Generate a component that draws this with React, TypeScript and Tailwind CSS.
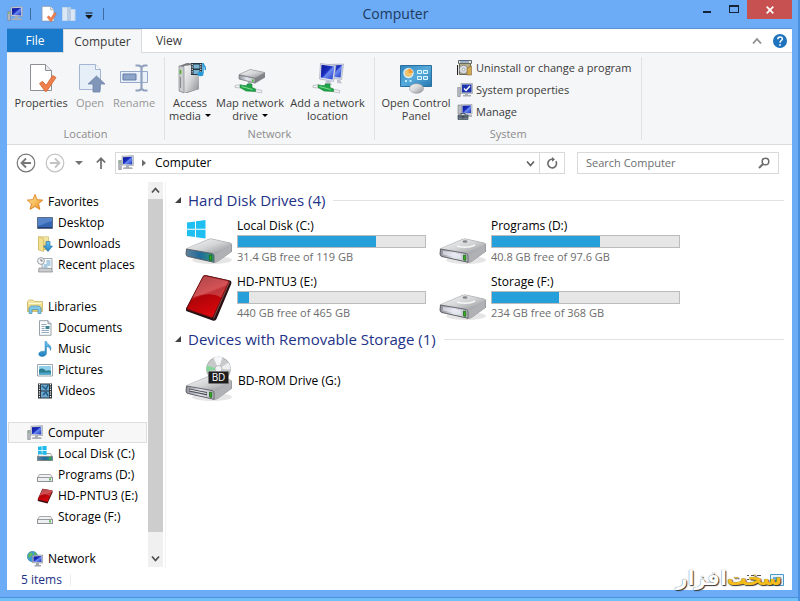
import { useState } from "react";
import type { ReactNode } from "react";

type IconProps = { className?: string };

/* Gradients shared by all of the icons below. */
function IconDefs() {
  return (
    <svg width="0" height="0" className="absolute" aria-hidden="true">
      <defs>
        <linearGradient id="metal" x1="0" y1="0" x2="1" y2="1">
          <stop offset="0" stopColor="#fafafa" />
          <stop offset="0.5" stopColor="#d3d4d6" />
          <stop offset="1" stopColor="#8b8c8f" />
        </linearGradient>
        <linearGradient id="metalFront" x1="0" y1="0" x2="1" y2="0">
          <stop offset="0" stopColor="#8d8f96" />
          <stop offset="0.5" stopColor="#e4e6f0" />
          <stop offset="1" stopColor="#b9bbc4" />
        </linearGradient>
        <linearGradient id="teal" x1="0" y1="0" x2="1" y2="0">
          <stop offset="0" stopColor="#5f8299" />
          <stop offset="0.5" stopColor="#1f6a9c" />
          <stop offset="1" stopColor="#2f9a7c" />
        </linearGradient>
        <linearGradient id="screen" x1="0" y1="0" x2="1" y2="1">
          <stop offset="0" stopColor="#0a1590" />
          <stop offset="0.45" stopColor="#1c2fc0" />
          <stop offset="0.55" stopColor="#6d8cf0" />
          <stop offset="1" stopColor="#1a34c4" />
        </linearGradient>
        <linearGradient id="red" x1="0" y1="0" x2="0.4" y2="1">
          <stop offset="0" stopColor="#8c1418" />
          <stop offset="0.5" stopColor="#c9282c" />
          <stop offset="0.55" stopColor="#b00509" />
          <stop offset="1" stopColor="#d8060c" />
        </linearGradient>
        <linearGradient id="panel" x1="0" y1="0" x2="1" y2="1">
          <stop offset="0" stopColor="#2f86bd" />
          <stop offset="0.5" stopColor="#56aadb" />
          <stop offset="1" stopColor="#2577ae" />
        </linearGradient>
        <linearGradient id="gold" x1="0" y1="0" x2="1" y2="1">
          <stop offset="0" stopColor="#fff3a8" />
          <stop offset="1" stopColor="#f08a1c" />
        </linearGradient>
        <linearGradient id="folder" x1="0" y1="0" x2="0" y2="1">
          <stop offset="0" stopColor="#f8edb0" />
          <stop offset="1" stopColor="#dfc564" />
        </linearGradient>
        <linearGradient id="sky" x1="0" y1="0" x2="0" y2="1">
          <stop offset="0" stopColor="#6cc3ee" />
          <stop offset="1" stopColor="#1f7fbe" />
        </linearGradient>
      </defs>
    </svg>
  );
}

function ComputerIcon({ className = "size-4" }: IconProps) {
  return (
    <svg viewBox="0 0 16 16" className={className} aria-hidden="true">
      <path d="M.7 5.5h2.6v9H.7z" fill="#b9bdc2" stroke="#7d8288" strokeWidth=".6" />
      <path d="M1.2 7h1.4" stroke="#49b04b" />
      <path d="M4 1.2 15.4.6v10L4 10z" fill="#d7dae0" stroke="#8f949c" strokeWidth=".6" />
      <path d="m5 2.2 9.2-.5v7.8L5 9z" fill="url(#screen)" />
      <path d="M8 10.3h3v2H8zM5.5 12.3h8.5l.8 1.8H5z" fill="#a9aeb5" />
    </svg>
  );
}

function PropertiesIcon({ className = "size-8" }: IconProps) {
  return (
    <svg viewBox="0 0 32 32" className={className} aria-hidden="true">
      <path d="M5.500 2.500h15l6 6v20h-21z" fill="#fff" stroke="#8e9095" />
      <path d="M20.500 2.500v6h6" fill="#e8e9eb" stroke="#8e9095" />
      <path d="M14.500 21.500l3-2.200 3.600 4 6.600-9.800 3.300 2-9.200 13.700-1.600.2z" fill="#ef7f4d" stroke="#d0612f" strokeWidth=".8" />
    </svg>
  );
}

function OpenIcon({ className = "size-8" }: IconProps) {
  return (
    <svg viewBox="0 0 32 32" className={className} aria-hidden="true">
      <path d="M5.500 2.500h16l5 5v20h-21z" fill="#e6eef8" stroke="#a3b5d3" />
      <path d="M21.500 2.500v5h5" fill="#f7fafd" stroke="#a3b5d3" />
      <path d="m22.500 14 8.500 8h-5v8h-7v-8h-5z" fill="#8096b9" stroke="#7187ab" strokeWidth=".8" />
    </svg>
  );
}

function RenameIcon({ className = "size-8" }: IconProps) {
  return (
    <svg viewBox="0 0 32 32" className={className} aria-hidden="true">
      <path d="M2.500 9.500h27v11h-27z" fill="#e9f0f9" stroke="#96a9c8" />
      <path d="M5 12h13v6H5z" fill="#8ea4c8" stroke="#647ca6" />
      <path d="M17.500 3.500h3.500l2.500 1.500 2.500-1.500h3.500M23.500 5v22M17.500 28.500h3.500l2.500-1.500 2.500 1.500h3.500" fill="none" stroke="#8fa1bf" strokeWidth="2.200" />
    </svg>
  );
}

function AccessMediaIcon() {
  return (
    <svg viewBox="0 0 32 32" className="size-8" aria-hidden="true">
      <path d="m5 4 8-3 12 1v25l-12 4-8-2z" fill="#77797c" />
      <path d="m10 4 15-2v25l-15 4z" fill="url(#metal)" />
      <path d="m5 4 5 .5V31l-5-2z" fill="#c9cbcf" stroke="#77797d" strokeWidth=".6" />
      <path d="M6.500 8v4" stroke="#53b327" strokeWidth="1.600" />
      <path d="M6.500 15v11" stroke="#8a8c90" />
      <path d="M17 1h11v12H17z" fill="#263743" />
      <path d="M19.500 2.500h6v4h-6zM19.500 8h6v4h-6z" fill="#79b2d0" />
      <path d="M18.200 2v10M26.800 2v10" stroke="#fff" strokeDasharray="1.200 1.200" />
      <path d="M29 1v10" stroke="#2699d6" strokeWidth="1.500" />
      <path d="M29 1c0 3 3.500 3 2 7" fill="none" stroke="#2699d6" strokeWidth="1.500" />
      <ellipse cx="26.500" cy="12" rx="3" ry="2.200" fill="#2699d6" />
    </svg>
  );
}

function NetworkCable() {
  return (
    <>
      <path d="m1 23.500 6-1v3.500l-6-.5z" fill="#f0f2f3" stroke="#a2a7ac" strokeWidth=".6" />
      <path d="m21 27 7 1.500-.5 2.500-7-1.500z" fill="#f0f2f3" stroke="#a2a7ac" strokeWidth=".6" />
      <path d="m6 23 7 .8v-1.800h5v3.500l3.500 1.500v2.500L12 29l-6-3.500z" fill="#1fa548" stroke="#148536" strokeWidth=".6" />
      <path d="m7.500 24.500 11 3" stroke="#83dd94" />
    </>
  );
}

function MapDriveIcon() {
  return (
    <svg viewBox="0 0 32 32" className="size-8" aria-hidden="true">
      <path d="m5 12.500 11-5 15 3v5L21 21.500 5 17z" fill="#808287" />
      <path d="m5 12.500 11-5 15 3-10 5.500z" fill="url(#metal)" stroke="#97999d" strokeWidth=".6" />
      <path d="m5 13 16 3.500v4.500L5 17z" fill="url(#metalFront)" stroke="#707277" strokeWidth=".6" />
      <path d="M18.800 17.500v2" stroke="#49c02a" strokeWidth="1.800" />
      <path d="M14 20h3v3h-3z" fill="#aeb2b6" />
      <NetworkCable />
    </svg>
  );
}

function AddLocationIcon() {
  return (
    <svg viewBox="0 0 32 32" className="size-8" aria-hidden="true">
      <path d="m17 2.500 14.500-.5-2 15.500-12-1.500z" fill="#d5d9e8" stroke="#9ba1b8" strokeWidth=".6" />
      <path d="m18 3.500 12-.5-1.500 12.500-10.500-1z" fill="url(#screen)" />
      <path d="m8.500 1.500 15.500 2-2.500 16-14-2.500z" fill="#e3e6f2" stroke="#9ba1b8" strokeWidth=".6" />
      <path d="m9.500 2.700 13 1.800-2 13-11.700-2z" fill="url(#screen)" />
      <path d="M14 19h4l2 4-7-1zM25 18h3l2 3.500-5-.5z" fill="#c0c4ce" />
      <NetworkCable />
    </svg>
  );
}

function ControlPanelIcon() {
  return (
    <svg viewBox="0 0 34 32" className="h-8 w-[34px]" aria-hidden="true">
      <path d="M1.500 3.500h31v21h-31z" fill="url(#panel)" stroke="#2b6f9f" />
      <circle cx="9.500" cy="11" r="4.500" fill="#f0c46a" stroke="#d4ecfa" strokeWidth="1.500" />
      <path d="M9.500 11V6.500a4.500 4.500 0 0 1 4.500 4.500z" fill="#f69d3b" />
      <path d="M18.500 8.500h4v3h-4zM24.500 8.500h4v3h-4zM18.500 14.500h4v3h-4zM24.500 14.500h4v3h-4z" fill="#55b4e4" stroke="#e3f6ff" />
      <path d="M6 19h2M10.500 19h2" stroke="#bfe9ff" strokeWidth="2" />
      <ellipse cx="17.500" cy="26.500" rx="7" ry="4.800" fill="url(#metal)" stroke="#94989c" strokeWidth=".6" />
    </svg>
  );
}

function UninstallIcon() {
  return (
    <svg viewBox="0 0 16 16" className="size-4" aria-hidden="true">
      <path d="M1.500.500h13v3h-13z" fill="#ece9d8" stroke="#5d6676" />
      <path d="M3 2h9" stroke="#4779bd" />
      <path d="M2.500 3.500h11v11h-11z" fill="#b5ae86" stroke="#6d6a56" />
      <path d="M.5 5v10" stroke="#222" strokeWidth="1.200" />
      <circle cx="6.500" cy="9.500" r="4.200" fill="#dcdfe2" stroke="#74787c" strokeWidth=".7" />
      <circle cx="6.500" cy="9.500" r="1.300" fill="#fff" stroke="#7b7f83" strokeWidth=".6" />
      <path d="m10 8 4.500-2v9L10 15z" fill="#d1a94e" stroke="#82683a" strokeWidth=".6" />
    </svg>
  );
}

function SystemPropertiesIcon() {
  return (
    <svg viewBox="0 0 16 16" className="size-4" aria-hidden="true">
      <path d="M.7 5.500h2.600v9H.7z" fill="#b9bdc2" stroke="#7d8288" strokeWidth=".6" />
      <path d="M4 1.500h11.500v10H4z" fill="#d5d9e0" stroke="#8f949c" strokeWidth=".6" />
      <path d="M5 2.500h9.500v8H5z" fill="#1e34ad" />
      <path d="m7 6.500 2 2 4-4.500" fill="none" stroke="#fff" strokeWidth="1.400" />
      <path d="M8 11.500h3v1.500H8zM6 13h8v1.500H6z" fill="#a9aeb5" />
    </svg>
  );
}

function ManageIcon() {
  return (
    <svg viewBox="0 0 16 16" className="size-4" aria-hidden="true">
      <path d="M1 1h4v9H1z" fill="#b9bdc2" stroke="#7d8288" strokeWidth=".6" />
      <path d="M4.500.8 15 .5V10l-10.500.5z" fill="#d7dae0" stroke="#8f949c" strokeWidth=".6" />
      <path d="M5.500 1.800 14 1.500V9l-8.500.3z" fill="url(#screen)" />
      <path d="M10 11h5v2h-5z" fill="#b4b8be" />
      <path d="M1 11h10v4.500H1z" fill="#73818e" stroke="#3e4a55" strokeWidth=".7" />
      <path d="M4 11V9.500h4V11M1 13h10M5 12.500h2v1.500H5z" fill="#d8dde1" stroke="#35404a" strokeWidth=".8" />
    </svg>
  );
}

function StarIcon() {
  return (
    <svg viewBox="0 0 16 16" className="size-4" aria-hidden="true">
      <path d="m8 .5 2.200 5.200 5.500.4-4.200 3.700 1.400 5.600L8 12.400l-4.900 3 1.400-5.600L.3 6.100l5.500-.4z" fill="url(#gold)" stroke="#dd8120" strokeWidth=".9" strokeLinejoin="round" />
    </svg>
  );
}

function DesktopIcon() {
  return (
    <svg viewBox="0 0 16 16" className="size-4" aria-hidden="true">
      <path d="M.5 2.500h15v11H.5z" fill="#3566b4" stroke="#5a6e8c" />
      <path d="M1 3h14v3L1 11z" fill="#6a97da" opacity=".6" />
      <path d="M1 12.500h14" stroke="#243c66" />
    </svg>
  );
}

function DownloadsIcon() {
  return (
    <svg viewBox="0 0 16 16" className="size-4" aria-hidden="true">
      <path d="M1.500 .8h10v13h-10z" fill="url(#folder)" stroke="#cfb45f" strokeWidth=".7" />
      <path d="m1.500.8 5 1.700v13l-5-1.700z" fill="#f3e08f" stroke="#cfb45f" strokeWidth=".7" />
      <path d="M9 5.500h4v4.500h2.500L11 15.500 6.500 10H9z" fill="url(#sky)" stroke="#1c6aa5" strokeWidth=".6" />
    </svg>
  );
}

function RecentIcon() {
  return (
    <svg viewBox="0 0 16 16" className="size-4" aria-hidden="true">
      <path d="M5 1.500h10v11H5z" fill="#f8fafb" stroke="#8b959e" strokeWidth=".8" />
      <path d="M9.500 4h4M9.500 6h4M6.500 8h7M6.500 10h4" stroke="#5fa0cc" />
      <path d="m2 11 12.500.5 1 3.500h-14z" fill="#c9cdd0" stroke="#81868a" strokeWidth=".7" />
      <circle cx="4" cy="4" r="3.400" fill="#f4f5f6" stroke="#84898e" strokeWidth=".8" />
      <path d="M4 2v2h1.800" fill="none" stroke="#555" strokeWidth=".8" />
    </svg>
  );
}

function LibrariesIcon() {
  return (
    <svg viewBox="0 0 16 16" className="size-4" aria-hidden="true">
      <path d="M.5 2.500 2 1h4l1.500 1.500h8v10H.5z" fill="url(#folder)" stroke="#c9ae58" strokeWidth=".7" />
      <path d="M2 4.500h12" stroke="#fff8d4" />
      <path d="M2 14.500V9l2-2h8l2 2v5.500h-3V10.500H5v4z" fill="#83c8e6" stroke="#4592b8" strokeWidth=".7" />
    </svg>
  );
}

function DocumentsIcon() {
  return (
    <svg viewBox="0 0 16 16" className="size-4" aria-hidden="true">
      <path d="M2.500.7h8.500l3 3v11.600H2.500z" fill="#fbfcfd" stroke="#7f8a92" strokeWidth=".8" />
      <path d="M11 .7v3h3" fill="#dde3e8" stroke="#7f8a92" strokeWidth=".8" />
      <path d="M4.500 4.500h5M4.500 6.500h3M4.500 8.500h3M4.500 10.500h7.500M4.500 12.500h7.500" stroke="#7a93a8" strokeWidth=".8" />
      <path d="M8.500 6h4v3h-4z" fill="#3c8796" />
    </svg>
  );
}

function MusicIcon() {
  return (
    <svg viewBox="0 0 16 16" className="size-4" aria-hidden="true">
      <path d="M8 .5h1.500c.5 3 6 3.500 4 9 0-2.500-1.700-3.500-4-4V12c0 2-2 3.500-4.300 3.500S1.500 14.300 1.700 12.700C2 10.800 5 9.600 8 10.500z" fill="url(#sky)" stroke="#277fb4" strokeWidth=".5" />
    </svg>
  );
}

function PicturesIcon() {
  return (
    <svg viewBox="0 0 16 16" className="size-4" aria-hidden="true">
      <path d="M.5 2.500h15v11.500H.5z" fill="#fff" stroke="#84909a" strokeWidth=".8" />
      <path d="M2 4h12v8.500H2z" fill="#8ed0ec" />
      <path d="M2 8c3-3 5-1 7 1 2-1 3-1 5 0v3.500H2z" fill="#2d7d8e" />
      <path d="M2 10.500h12v2H2z" fill="#4aa6cf" />
    </svg>
  );
}

function VideosIcon() {
  return (
    <svg viewBox="0 0 16 16" className="size-4" aria-hidden="true">
      <path d="M1 .5h14v15H1z" fill="#283038" />
      <path d="M4 1.500h8v6H4zM4 8.500h8v6H4z" fill="#69a7cf" />
      <path d="m5 3 4 3 2-4M6 12l3-3 2 4" fill="none" stroke="#235a83" strokeWidth="1.500" />
      <path d="M2.500 1v14M13.500 1v14" stroke="#f2f4f5" strokeWidth="1.200" strokeDasharray="1.200 1.200" />
    </svg>
  );
}

function SmallDriveIcon({ system = false }: { system?: boolean }) {
  return (
    <svg viewBox="0 0 16 16" className="size-4" aria-hidden="true">
      <path d="M2.500 7.500h11l2 3v4H.5v-4z" fill="#f1f2f3" stroke="#909396" strokeWidth=".8" />
      <path d="M.5 10.500h15v4H.5z" fill={system ? "url(#teal)" : "#eceef1"} stroke="#808387" strokeWidth=".8" />
      <path d="M13 11.300v2.200" stroke="#3fae35" strokeWidth="1.500" />
      {system && <path d="m1 .8 3.700-.5V4H1zM5.400.2 9.600-.4V4H5.400zM1 4.700h3.700v3.700L1 8zM5.400 4.700h4.200v4.200l-4.200-.5z" fill="#1fb9ec" />}
    </svg>
  );
}

function SmallRedDriveIcon() {
  return (
    <svg viewBox="0 0 16 16" className="size-4" aria-hidden="true">
      <path d="m5.500.8 10 1.700v2L10.500 15.500.8 13v-2z" fill="#3d0d10" />
      <path d="m5.500.8 10 1.700L10.500 13.700.8 11.500z" fill="url(#red)" />
      <path d="m5.500.8 10 1.700L13 8C9 6 6 6 3 7z" fill="#fff" opacity=".2" />
    </svg>
  );
}

function NetworkIcon() {
  return (
    <svg viewBox="0 0 16 16" className="size-4" aria-hidden="true">
      <circle cx="5.500" cy="5.500" r="5.200" fill="#3e9cd3" stroke="#2b75a3" strokeWidth=".5" />
      <path d="M2 2.500c2-2 4-1 3.500 1S3 5 2.500 7.500C1 6 .5 4.500 2 2.500zM7 1c2 .5 3 2 3.300 3.500L7.500 4z" fill="#5fbb5b" />
      <path d="M5.500 4.500 15.500 4v8l-10-.3z" fill="#d7dae0" stroke="#7d838c" strokeWidth=".6" />
      <path d="m6.500 5.500 8-.4v5.800l-8-.2z" fill="url(#screen)" />
      <path d="M9 12h3v2H9zM7.500 14H14v1.500H7.500z" fill="#a0a5ac" />
    </svg>
  );
}

/* Body used by all of the 48px drives; the front plate changes colour. */
function DriveBody({ front = "url(#metalFront)" }: { front?: string }) {
  return (
    <>
      <ellipse cx="27" cy="41" rx="20" ry="4" fill="#000" opacity=".1" />
      <path d="M1 30.500 23 20.500q2-1 4-.6l18.500 4.200q1.500.5 1.500 2v6.500L33 42.500q-2 1.500-4 1L3 37.500Q1 37 1 35z" fill="#85868a" />
      <path d="M1.500 29.500 23 20.500q2-1 4-.6l18.500 4.200q1.500.8 0 1.900L32 34.500q-1.500 1-4 .5L3 31.500q-2-.7-1.500-2z" fill="url(#metal)" stroke="#aeb0b3" strokeWidth=".6" />
      <path d="M28 35q3 .5 5-1l13.500-9v7.500L33 42.500q-2 1.500-4 1z" fill="#b0b1b4" />
      <path d="M1.500 30 27 34.500q2 .5 2 2.500v6.300L3 37.500Q1 37 1 35z" fill={front} stroke="#5c5e64" strokeWidth=".9" />
      <path d="M24.500 36.200h2.300v5.200l-2.300-.5z" fill="#37ad22" stroke="#145d0c" strokeWidth=".7" />
    </>
  );
}

function DriveIcon() {
  return (
    <svg viewBox="0 0 48 48" className="size-12" aria-hidden="true">
      <DriveBody />
      <ellipse cx="26" cy="22.500" rx="2.500" ry="1.200" fill="#85878b" />
      <path d="M18 27q10 3 18-1" fill="none" stroke="#f7f7f7" strokeWidth="1.500" />
      <path d="m4 32 18 3.400v4.200L4 35.500z" fill="#eceef6" opacity=".6" />
    </svg>
  );
}

function SystemDriveIcon() {
  return (
    <svg viewBox="0 0 48 48" className="size-12" aria-hidden="true">
      <DriveBody front="url(#teal)" />
      <path d="m2 3.500 8-1v7.300H2zM11 2.300l9.500-1.300v8.800H11zM2 10.800h8v7.300l-8-1zM11 10.800h9.500v8.700L11 18.200z" fill="#1fc0f1" />
    </svg>
  );
}

function RedDriveIcon() {
  return (
    <svg viewBox="0 0 48 48" className="size-12" aria-hidden="true">
      <path d="M18 1.500q1-1.500 3-1.300l24 5.300q2 .7 1.200 3.500L31.500 44q-1 2.500-4 1.500L2.500 36.500Q.5 36 1 33.500z" fill="#291012" />
      <path d="M18 1.500q1-1.500 2.500-1L43 5.500q1.500.7.8 2L28.500 41q-.8 1.800-2.500 1.300L3 34.500q-1.500-.6-.8-2z" fill="url(#red)" stroke="#6c1013" strokeWidth=".7" />
      <path d="M18.500 2q1-1 2-.7L42 6q1.500.5.8 1.700L36 22.500C28 17.500 19 19 8 22z" fill="#fff" opacity=".2" />
      <path d="m28.500 43.500 16-36.500" stroke="#a5686a" strokeWidth=".7" />
    </svg>
  );
}

function BdDriveIcon() {
  return (
    <svg viewBox="0 0 48 48" className="size-12" aria-hidden="true">
      <DriveBody />
      <path d="m4 32.500 18 3.500v3.500L4 35.500z" fill="#4e5056" />
      <path d="m4.500 34 17 3.500" stroke="#e8e9ec" strokeWidth="1.200" />
      <circle cx="33.500" cy="13" r="12" fill="#c7c9cb" stroke="#9b9da0" strokeWidth=".7" />
      <path d="M33.500 13 22 9.500a12 12 0 0 0-.3 6z" fill="#86d69a" />
      <path d="m33.500 13-5-11a12 12 0 0 1 9-.5z" fill="#f5f6f7" />
      <path d="m33.500 13 10-6.500a12 12 0 0 1 2 7z" fill="#eceef0" />
      <circle cx="33.500" cy="13" r="3.500" fill="#f1f2f4" stroke="#a6a8ab" strokeWidth=".7" />
      <path d="M23.500 15.500h20v12h-20z" fill="#1d1d1d" />
      <text x="33.500" y="25.300" textAnchor="middle" fontSize="10" fill="#fff">BD</text>
    </svg>
  );
}

function RibbonButton({ icon, label, width, disabled, menu }: {
  icon: ReactNode;
  label: [string, string?];
  width: string;
  disabled?: boolean;
  menu?: boolean;
}) {
  return (
    <button
      disabled={disabled}
      className={`flex flex-col items-center whitespace-nowrap pt-0.5 text-[#3b3b3b] disabled:text-[#979797] ${width}`}
    >
      <span className="flex h-[37px] items-center">{icon}</span>
      <span className="leading-[13px]">{label[0]}</span>
      {label[1] && (
        <span className="flex items-center gap-1 leading-[13px]">
          {label[1]}
          {menu && <span className="border-x-[3px] border-t-[3px] border-x-transparent border-t-black" />}
        </span>
      )}
    </button>
  );
}

function RibbonGroup({ title, className, children }: { title: string; className: string; children: ReactNode }) {
  return (
    <section className="my-1 flex flex-col justify-between border-r border-[#e0e1e2]" aria-label={title}>
      <div className={`flex items-start ${className}`}>{children}</div>
      <p className="text-center leading-3 text-[#8b8b8b]">{title}</p>
    </section>
  );
}

function Ribbon() {
  return (
    <div className="flex h-[93px] border-y border-[#dadbdc] bg-[#f5f6f7] text-[11px]">
      <RibbonGroup title="Location" className="pl-1.5 pr-[7px]">
        <RibbonButton icon={<PropertiesIcon />} label={["Properties"]} width="w-14" />
        <RibbonButton icon={<OpenIcon />} label={["Open"]} width="w-[42px]" disabled />
        <RibbonButton icon={<RenameIcon />} label={["Rename"]} width="w-[46px]" disabled />
      </RibbonGroup>
      <RibbonGroup title="Network" className="pl-1 pr-2">
        <RibbonButton icon={<AccessMediaIcon />} label={["Access", "media"]} width="w-[42px]" menu />
        <RibbonButton icon={<MapDriveIcon />} label={["Map network", "drive"]} width="w-[78px]" menu />
        <RibbonButton icon={<AddLocationIcon />} label={["Add a network", "location"]} width="w-[77px]" />
      </RibbonGroup>
      <RibbonGroup title="System" className="pl-1 pr-2.5">
        <RibbonButton icon={<ControlPanelIcon />} label={["Open Control", "Panel"]} width="w-[74px]" />
        <div className="ml-1 flex flex-col whitespace-nowrap text-[#3b3b3b]">
          <button className="flex h-[22px] items-center gap-[3px]"><UninstallIcon />Uninstall or change a program</button>
          <button className="flex h-[22px] items-center gap-[3px]"><SystemPropertiesIcon />System properties</button>
          <button className="flex h-[22px] items-center gap-[3px]"><ManageIcon />Manage</button>
        </div>
      </RibbonGroup>
    </div>
  );
}

function TitleBar() {
  return (
    <header className="grid h-7 grid-cols-[1fr_auto_1fr]">
      <div className="flex items-center">
        <ComputerIcon />
        <span className="ml-[7px] h-3 w-px bg-[#3f6c9f]" />
        <button aria-label="Properties" className="ml-2"><PropertiesIcon className="size-[18px]" /></button>
        <button aria-label="New folder" className="ml-1">
          <svg viewBox="0 0 16 16" className="size-4" aria-hidden="true">
            <path d="M1.500 1.500h5v13h-5zM9 3.500h5v11H9z" fill="#dbe7f4" stroke="#c4d6ea" />
            <path d="m6 1.500 4-.8v13L6 15z" fill="#b7cbe2" />
          </svg>
        </button>
        <button aria-label="Customize Quick Access Toolbar" className="ml-2 mt-1">
          <svg viewBox="0 0 8 8" className="size-2" aria-hidden="true">
            <path d="M.5 1h7M1 3.500h6l-3 3z" fill="#111" stroke="#111" />
          </svg>
        </button>
        <span className="ml-2.5 h-3 w-px bg-[#3f6c9f]" />
      </div>
      <h1 className="mr-2 text-sm leading-7 text-[#1e3a5c]">Computer</h1>
      <div className="flex items-start justify-end">
        <button aria-label="Minimize" className="flex h-[18px] w-7 items-center justify-center">
          <span className="mt-1.5 h-0.5 w-2 bg-[#16243a]" />
        </button>
        <button aria-label="Maximize" className="flex h-[18px] w-[26px] items-center justify-center">
          <span className="h-2 w-2.5 border border-t-2 border-[#16243a]" />
        </button>
        <button aria-label="Close" className="flex h-[19px] w-[45px] items-center justify-center bg-[#c75050]">
          <svg viewBox="0 0 8 8" className="size-2" aria-hidden="true">
            <path d="m.7.7 6.600 6.600M7.300.7.7 7.300" stroke="#fff" strokeWidth="1.700" />
          </svg>
        </button>
      </div>
    </header>
  );
}

function Tabs() {
  return (
    <nav className="-mb-px flex h-6 text-[#3b3b3b]">
      <button className="w-14 bg-[#1979ca] text-white">File</button>
      <button className="relative w-[79px] border-x border-t border-[#dadbdc] bg-[#f5f6f7]">Computer</button>
      <button className="w-[54px]">View</button>
      <span className="flex-1" />
      <button aria-label="Minimize the Ribbon" className="mr-[11px]">
        <svg viewBox="0 0 10 8" className="h-2 w-2.5" aria-hidden="true">
          <path d="m1 6.500 4-4.500 4 4.500" fill="none" stroke="#8c8c8c" strokeWidth="1.800" />
        </svg>
      </button>
      <button aria-label="Help" className="mr-[5px]">
        <svg viewBox="0 0 14 14" className="size-3.5" aria-hidden="true">
          <circle cx="7" cy="7" r="7" fill="#1e73be" />
          <path d="M4.800 5.200c0-3 4.600-3 4.600-.4C9.400 6.500 7 6.500 7 8.700M7 10v1.800" fill="none" stroke="#fff" strokeWidth="1.500" />
        </svg>
      </button>
    </nav>
  );
}

function AddressBar() {
  const [query, setQuery] = useState("");

  return (
    <div className="flex items-center pb-2 pl-[9px] pr-[13px] pt-[7px]">
      <button aria-label="Back">
        <svg viewBox="0 0 20 20" className="size-5" fill="none" stroke="#777" aria-hidden="true">
          <circle cx="10" cy="10" r="8.800" strokeWidth="1.200" />
          <path d="M15 10H6m4-4.500L5.500 10l4.500 4.500" strokeWidth="1.800" />
        </svg>
      </button>
      <button aria-label="Forward" disabled className="ml-[9px]">
        <svg viewBox="0 0 20 20" className="size-5" fill="none" stroke="#c3c3c3" aria-hidden="true">
          <circle cx="10" cy="10" r="8.800" strokeWidth="1.200" />
          <path d="M5 10h9m-4-4.500 4.500 4.500-4.500 4.500" strokeWidth="1.800" />
        </svg>
      </button>
      <button aria-label="Recent locations" className="ml-2.5">
        <span className="block border-x-4 border-t-4 border-x-transparent border-t-[#737373]" />
      </button>
      <button aria-label="Up" className="ml-3">
        <svg viewBox="0 0 12 14" className="h-3.5 w-3" fill="none" stroke="#6d6d6d" aria-hidden="true">
          <path d="M6 13V2.500M1.800 6.500 6 2.300l4.200 4.200" strokeWidth="1.700" />
        </svg>
      </button>
      <div className="ml-2 flex h-[22px] flex-1 items-center border border-[#d9d9d9] pl-0.5">
        <ComputerIcon />
        <svg viewBox="0 0 4 8" className="ml-2 mr-[9px] h-2 w-1" aria-hidden="true">
          <path d="m0 .5 4 3.500-4 3.500z" fill="#6d6d6d" />
        </svg>
        <a href="#computer" className="flex-1 text-black">Computer</a>
        <button aria-label="Previous locations" className="pr-1">
          <svg viewBox="0 0 9 7" className="h-[7px] w-[9px]" aria-hidden="true">
            <path d="m1 1.500 3.500 4L8 1.500" fill="none" stroke="#5f5f5f" strokeWidth="1.600" />
          </svg>
        </button>
        <button aria-label="Refresh" className="flex h-full w-[25px] items-center justify-center border-l border-[#d9d9d9]">
          <svg viewBox="0 0 12 12" className="size-3" fill="none" stroke="#6d6d6d" aria-hidden="true">
            <path d="M9.800 4.200A4.300 4.300 0 1 1 5.500 2.300H8" strokeWidth="1.600" />
            <path d="M6 0v4.800L9 2.400z" fill="#6d6d6d" stroke="none" />
          </svg>
        </button>
      </div>
      <label className="ml-3 flex h-[22px] w-[202px] items-center border border-[#d9d9d9] px-2 text-[11px]">
        <input
          type="text"
          aria-label="Search Computer"
          placeholder="Search Computer"
          value={query}
          onChange={(e) => setQuery(e.target.value)}
          className="min-w-0 flex-1 bg-transparent outline-none placeholder:text-[#6d6d6d]"
        />
        <svg viewBox="0 0 12 12" className="size-3" fill="none" stroke="#6d6d6d" aria-hidden="true">
          <circle cx="7.500" cy="4.500" r="3.300" strokeWidth="1.500" />
          <path d="M5 7 1 11" strokeWidth="2" />
        </svg>
      </label>
    </div>
  );
}

const TREE: { label: string; icon: ReactNode; items: { label: string; icon: ReactNode }[] }[] = [
  {
    label: "Favorites",
    icon: <StarIcon />,
    items: [
      { label: "Desktop", icon: <DesktopIcon /> },
      { label: "Downloads", icon: <DownloadsIcon /> },
      { label: "Recent places", icon: <RecentIcon /> },
    ],
  },
  {
    label: "Libraries",
    icon: <LibrariesIcon />,
    items: [
      { label: "Documents", icon: <DocumentsIcon /> },
      { label: "Music", icon: <MusicIcon /> },
      { label: "Pictures", icon: <PicturesIcon /> },
      { label: "Videos", icon: <VideosIcon /> },
    ],
  },
  {
    label: "Computer",
    icon: <ComputerIcon />,
    items: [
      { label: "Local Disk (C:)", icon: <SmallDriveIcon system /> },
      { label: "Programs (D:)", icon: <SmallDriveIcon /> },
      { label: "HD-PNTU3 (E:)", icon: <SmallRedDriveIcon /> },
      { label: "Storage (F:)", icon: <SmallDriveIcon /> },
    ],
  },
  { label: "Network", icon: <NetworkIcon />, items: [] },
];

function NavigationPane() {
  const [selected, setSelected] = useState("Computer");

  return (
    <aside className="flex w-[156px] text-black">
      <ul className="flex flex-1 flex-col gap-[21px] whitespace-nowrap pl-px pt-[9px]">
        {TREE.map((group) => (
          <li key={group.label}>
            <button
              onClick={() => setSelected(group.label)}
              className={`flex h-[21px] w-[139px] items-center gap-[5px] border pl-[18px] ${
                selected === group.label ? "border-[#dedede] bg-[#f7f7f7]" : "border-transparent"
              }`}
            >
              {group.icon}
              {group.label}
            </button>
            <ul>
              {group.items.map((item) => (
                <li key={item.label}>
                  <button className="flex h-[21px] items-center gap-[5px] pl-[29px]">
                    {item.icon}
                    {item.label}
                  </button>
                </li>
              ))}
            </ul>
          </li>
        ))}
      </ul>
      <div className="mb-0.5 flex w-[15px] flex-col bg-[#f0f0f0]">
        <button aria-label="Scroll up" className="flex h-[17px] items-center justify-center">
          <svg viewBox="0 0 9 7" className="h-[7px] w-[9px]" aria-hidden="true">
            <path d="m1 5.500 3.500-4 3.500 4" fill="none" stroke="#505050" strokeWidth="1.800" />
          </svg>
        </button>
        <div className="mb-[18px] flex-1 bg-[#cdcdcd]" />
        <button aria-label="Scroll down" className="flex h-[17px] items-center justify-center">
          <svg viewBox="0 0 9 7" className="h-[7px] w-[9px]" aria-hidden="true">
            <path d="m1 1.500 3.500 4 3.500-4" fill="none" stroke="#505050" strokeWidth="1.800" />
          </svg>
        </button>
      </div>
    </aside>
  );
}

const DRIVES = [
  { name: "Local Disk (C:)", free: "31.4 GB free of 119 GB", used: 74, icon: <SystemDriveIcon /> },
  { name: "Programs (D:)", free: "40.8 GB free of 97.6 GB", used: 58, icon: <DriveIcon /> },
  { name: "HD-PNTU3 (E:)", free: "440 GB free of 465 GB", used: 6, icon: <RedDriveIcon /> },
  { name: "Storage (F:)", free: "234 GB free of 368 GB", used: 36, icon: <DriveIcon /> },
];

function SectionHeading({ children }: { children: ReactNode }) {
  return (
    <h2 className="flex h-[22px] items-center text-[15px] text-[#1e3287]">
      <svg viewBox="0 0 6 6" className="mr-[7px] size-1.5" aria-hidden="true">
        <path d="M6 0v6H0z" fill="#404040" />
      </svg>
      {children}
      <span className="ml-2 h-px flex-1 bg-[#e2e2e2]" />
    </h2>
  );
}

function Content() {
  return (
    <main className="ml-0.5 flex-1 border-l border-[#f2f2f2] pb-4 pl-[9px] pr-2 pt-[7px]">
      <SectionHeading>Hard Disk Drives (4)</SectionHeading>
      <ul className="mt-[5px] grid grid-cols-[repeat(auto-fill,254px)] pl-2.5">
        {DRIVES.map((drive) => (
          <li key={drive.name} className="flex h-14 items-start gap-1">
            <span className="pt-[3px]">{drive.icon}</span>
            <div className="w-[189px] pt-0.5">
              <p className="leading-4 text-black">{drive.name}</p>
              <div className="my-px h-[13px] border border-[#bcbcbc] bg-[#e6e6e6]">
                <div className="h-full bg-[#26a0da]" style={{ width: `${drive.used}%` }} />
              </div>
              <p className="text-[11px] leading-4 text-[#6d6d6d]">{drive.free}</p>
            </div>
          </li>
        ))}
      </ul>
      <SectionHeading>Devices with Removable Storage (1)</SectionHeading>
      <div className="flex h-14 items-start gap-[5px] pl-2.5 pt-1.5 text-black">
        <BdDriveIcon />
        <span className="pt-[17px] leading-4">BD-ROM Drive (G:)</span>
      </div>
    </main>
  );
}

function StatusBar() {
  return (
    <footer className="relative flex h-[21px] items-center pl-3.5 pr-2 text-[#1e3287]">
      <span>5 items</span>
      <span className="ml-2 h-3 w-px bg-[#ececec]" />
      <span className="flex-1" />
      <button aria-label="Details view" className="mr-2">
        <svg viewBox="0 0 16 12" className="h-3 w-4" fill="none" stroke="#555" aria-hidden="true">
          <path d="M1 1.500h2M1 5.500h2M1 9.500h2M5 1.500h4M11 1.500h4M5 5.500h4M11 5.500h4M5 9.500h4M11 9.500h4" />
        </svg>
      </button>
      <button aria-label="Large icons view">
        <svg viewBox="0 0 14 12" className="h-3 w-3.5" aria-hidden="true">
          <path d="M.5.5h13v11H.5z" fill="#e9f5fd" stroke="#4a9ac9" />
          <path d="M3 3h8v6H3z" fill="#63aede" />
        </svg>
      </button>
      <p
        dir="rtl"
        lang="fa"
        className="absolute bottom-0 right-2.5 flex whitespace-nowrap font-['DejaVu_Sans',sans-serif] text-xl font-bold leading-6 text-[#f4bd1c] [text-shadow:1px_1px_1px_#333,0_0_1px_#555]"
      >
        <span>سخت</span>
        <span className="text-white">افزار</span>
      </p>
    </footer>
  );
}

export default function App() {
  return (
    <div className="flex min-h-screen flex-col border-r-2 border-[#4a90e0] bg-[#6cabf5] font-['Open_Sans','Segoe_UI',sans-serif] text-xs">
      <IconDefs />
      <div className="flex flex-1 flex-col pb-[7px] pl-[7px] pr-1.5">
        <TitleBar />
        <div className="flex flex-1 flex-col border-t border-[#5d93d3] bg-white">
          <Tabs />
          <Ribbon />
          <AddressBar />
          <div className="flex flex-1">
            <NavigationPane />
            <Content />
          </div>
          <StatusBar />
        </div>
      </div>
      <div className="h-1 border-t border-[#4f90dc] bg-[#6fc0f7]" />
    </div>
  );
}
